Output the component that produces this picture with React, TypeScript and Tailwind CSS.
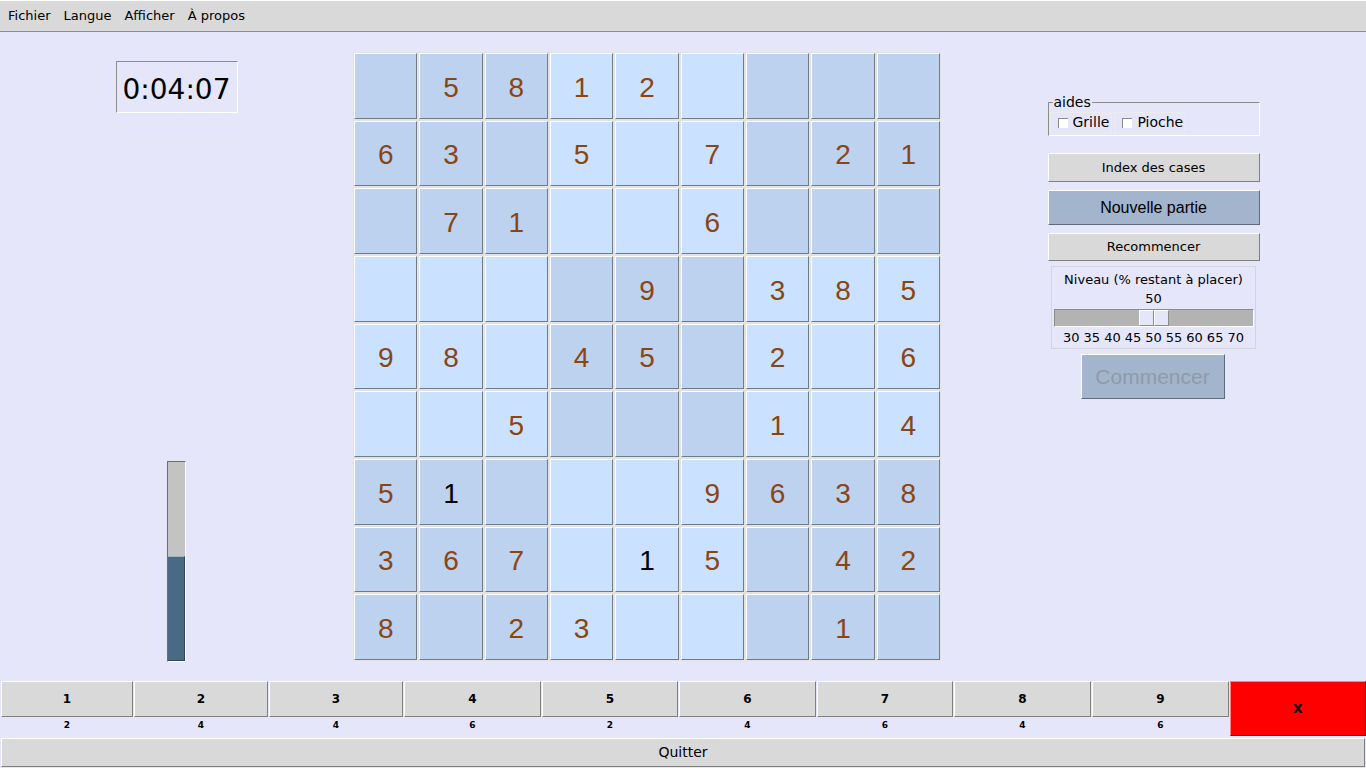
import React from 'react';

const rows: (string | null)[][] = [
  [null, '5', '8', '1', '2', null, null, null, null],
  ['6', '3', null, '5', null, '7', null, '2', '1'],
  [null, '7', '1', null, null, '6', null, null, null],
  [null, null, null, null, '9', null, '3', '8', '5'],
  ['9', '8', null, '4', '5', null, '2', null, '6'],
  [null, null, '5', null, null, null, '1', null, '4'],
  ['5', '*1', null, null, null, '9', '6', '3', '8'],
  ['3', '6', '7', null, '*1', '5', null, '4', '2'],
  ['8', null, '2', '3', null, null, null, '1', null],
];

// pieces left for each digit, and the widths Tk gave the buttons
const counts = [2, 4, 4, 6, 2, 4, 6, 4, 6];
const widths = [
  'w-[132px]', 'w-[134px]', 'w-[134px]', 'w-[137px]', 'w-[136px]',
  'w-[137px]', 'w-[136px]', 'w-[137px]', 'w-[137px]',
];
const ticks = [30, 35, 40, 45, 50, 55, 60, 65, 70];

function Cell({ value, dark }: { value: string | null; dark: boolean }) {
  const user = value?.startsWith('*');
  const text = user ? value!.slice(1) : value;
  return (
    <div
      className={`flex items-center justify-center pt-[4px] border-t border-l border-t-white border-l-white border-r border-b border-r-[#6f7c8a] border-b-[#6f7c8a] font-['Liberation_Sans',sans-serif] text-[28px] ${
        dark ? 'bg-[#bcd2ee]' : 'bg-[#cae1ff]'
      } ${user ? 'text-black' : 'text-[#8b4513]'}`}
    >
      {text}
    </div>
  );
}

function Check({ label }: { label: string }) {
  return (
    <div className="flex items-center gap-[5px] pl-[7px] pr-[2px] h-[21px] border border-[#ececec]">
      <span className="w-[10px] h-[10px] bg-white border-t border-l border-[#8a8a8a]" />
      <span>{label}</span>
    </div>
  );
}

export default function App() {
  return (
    <div className="w-[1366px] h-[768px] flex flex-col bg-[#e6e6fa] font-['DejaVu_Sans',sans-serif] text-black overflow-hidden">
      {/* menu */}
      <div className="h-[32px] shrink-0 flex items-center gap-[13px] px-[8px] bg-[#d9d9d9] border-b border-[#8c8c8c] border-t border-t-white text-[13px]">
        <span>Fichier</span>
        <span>Langue</span>
        <span>Afficher</span>
        <span>À propos</span>
      </div>

      {/* main */}
      <div className="flex-1 flex min-h-0">
        <div className="w-[353px] shrink-0 flex flex-col items-center justify-between pt-[29px] pb-[19px]">
          <div className="w-[122px] h-[52px] flex items-center justify-center pt-[6px] border-t border-l border-[#8c8c8c] border-r border-b border-r-white border-b-white text-[28px]">
            0:04:07
          </div>
          <div className="w-[19px] h-[201px] flex flex-col border-t border-l border-[#6e6e6e] border-r border-b border-r-white border-b-white">
            <div className="h-[94px] bg-[#c3c3c3]" />
            <div className="flex-1 bg-[#4a6984] border-t border-[#9fb0bf] border-r border-b border-r-[#2f465a] border-b-[#2f465a]" />
          </div>
        </div>

        <div className="pt-[20px]">
          <div className="w-[588px] h-[609px] grid grid-cols-9 grid-rows-9 gap-[2px] p-[1px] bg-[#e2e2e2]">
            {rows.map((r, i) =>
              r.map((v, j) => {
                const dark = (Math.floor(i / 3) + Math.floor(j / 3)) % 2 === 0;
                return <Cell key={`${i}-${j}`} value={v} dark={dark} />;
              })
            )}
          </div>
        </div>

        {/* right panel */}
        <div className="flex-1 flex flex-col items-center pt-[63px] text-[13px]">
          <div className="w-[212px] relative border border-[#8c8c8c] border-r-white border-b-white h-[34px] mt-[7px]">
            <span className="absolute -top-[9px] left-[4px] bg-[#e6e6fa] px-[1px] leading-[16px] text-[14px]">aides</span>
            <div className="flex pt-[9px] pl-[1px] gap-[2px] text-[14px]">
              <Check label="Grille" />
              <Check label="Pioche" />
            </div>
          </div>
          <div className="w-[212px] h-[29px] mt-[17px] flex items-center justify-center bg-[#d9d9d9] border border-white border-r-[#7f7f7f] border-b-[#7f7f7f]">
            Index des cases
          </div>
          <div className="w-[212px] h-[35px] mt-[8px] flex items-center justify-center bg-[#a2b5cd] border border-white border-r-[#5f6b78] border-b-[#5f6b78] font-['Liberation_Sans',sans-serif] text-[16px]">
            Nouvelle partie
          </div>
          <div className="w-[212px] h-[28px] mt-[8px] flex items-center justify-center bg-[#d9d9d9] border border-white border-r-[#7f7f7f] border-b-[#7f7f7f]">
            Recommencer
          </div>
          <div className="w-[205px] h-[83px] mt-[5px] flex flex-col items-center border border-[#d4d4dc]">
            <div className="mt-[4px] leading-[17px]">Niveau (% restant à placer)</div>
            <div className="leading-[17px] mt-[2px]">50</div>
            <div className="w-[200px] h-[18px] mt-[2px] relative bg-[#b3b3b3] border-t border-l border-[#8c8c8c] border-r border-b border-r-white border-b-white">
              <div className="absolute left-[84px] top-0 h-[16px] w-[30px] flex">
                <div className="flex-1 bg-[#e6e6fa] border border-white border-r-[#8c8c8c] border-b-[#8c8c8c]" />
                <div className="flex-1 bg-[#e6e6fa] border border-white border-r-[#8c8c8c] border-b-[#8c8c8c]" />
              </div>
            </div>
            <div className="flex gap-[4px] mt-[2px] leading-[18px]">
              {ticks.map((t) => (
                <span key={t}>{t}</span>
              ))}
            </div>
          </div>
          <div className="w-[144px] h-[45px] mt-[5px] mr-[2px] flex items-center justify-center bg-[#a2b5cd] border border-white border-r-[#5f6b78] border-b-[#5f6b78] font-['Liberation_Sans',sans-serif] text-[21px] text-[#8f9aa7]">
            Commencer
          </div>
        </div>
      </div>

      {/* bottom */}
      <div className="shrink-0 flex flex-col gap-[2px] pb-[1px]">
        <div className="flex gap-[1px] pl-[1px] h-[55px]">
          {counts.map((c, i) => (
            <div key={i} className={`${widths[i]} shrink-0 flex flex-col`}>
              <div className="h-[36px] flex items-center justify-center bg-[#d9d9d9] border border-white border-r-[#7f7f7f] border-b-[#7f7f7f] font-bold text-[12px]">
                {i + 1}
              </div>
              <div className="flex-1 flex items-center justify-center font-bold text-[9px] pb-[1px]">{c}</div>
            </div>
          ))}
          <div className="w-[136px] shrink-0 flex items-center justify-center bg-[#ff0000] border border-[#ff8080] border-r-[#8b0000] border-b-[#8b0000] font-bold text-[12px]">
            X
          </div>
        </div>
        <div className="h-[29px] mx-[1px] flex items-center justify-center bg-[#d9d9d9] border border-white border-r-[#7f7f7f] border-b-[#7f7f7f] text-[14px]">
          Quitter
        </div>
      </div>
    </div>
  );
}
